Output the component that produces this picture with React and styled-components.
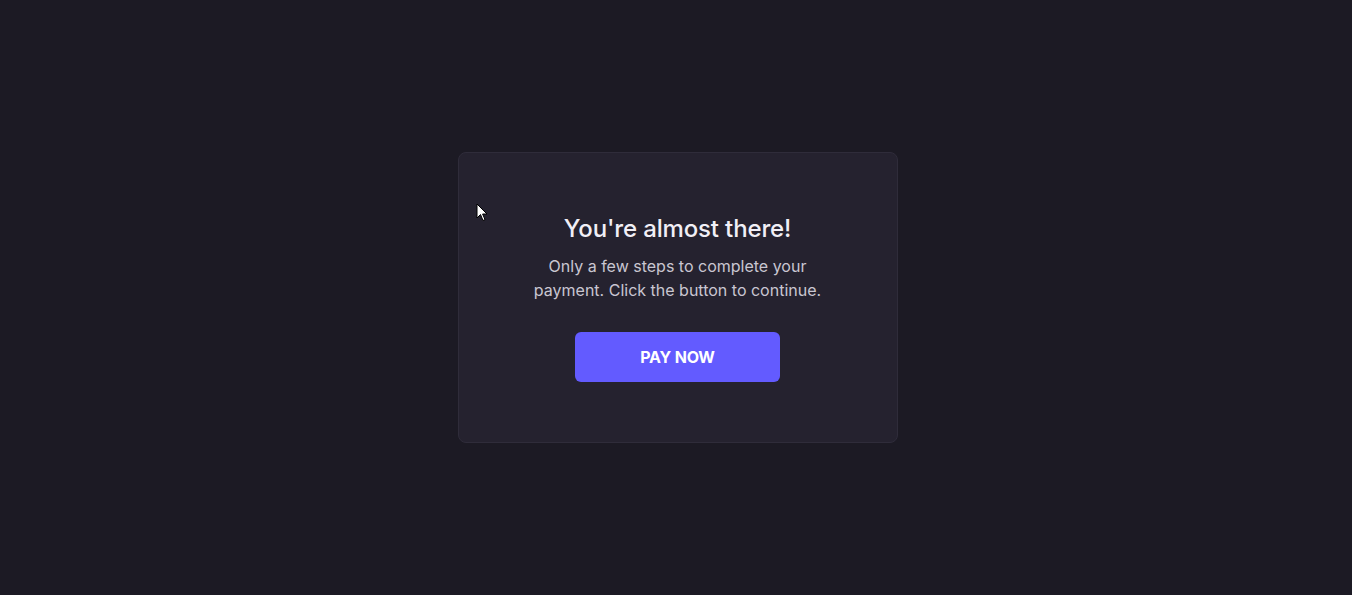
import React from "react";
import styled, { createGlobalStyle } from "styled-components";

const Global = createGlobalStyle`
  html, body { margin: 0; padding: 0; background: #1c1a24; }
  body { font-family: Inter, "Noto Sans", sans-serif; }
  * { box-sizing: border-box; }
`;

const Page = styled.main`
  position: relative;
  min-height: 595px;
  padding-left: 3px;
  display: flex;
  align-items: center;
  justify-content: center;
  background: #1c1a24;
`;

const Card = styled.section`
  width: 440px;
  height: 291px;
  padding: 60px 40px 0;
  background: #25222f;
  border: 1px solid #2f2c3a;
  border-radius: 8px;
  display: flex;
  flex-direction: column;
  align-items: center;
  text-align: center;
`;

const Title = styled.h1`
  margin: 0;
  font-size: 24px;
  line-height: 32px;
  font-weight: 500;
  color: #f1eff6;
  letter-spacing: -0.15px;
`;

const Subtitle = styled.p`
  margin: 9px 0 0;
  max-width: 300px;
  font-size: 16px;
  line-height: 24px;
  color: #c9c6d1;
  letter-spacing: 0;
`;

const PayButton = styled.button`
  margin-top: 30px;
  width: 205px;
  height: 50px;
  border: none;
  border-radius: 6px;
  background: #635bff;
  color: #ffffff;
  font-family: inherit;
  font-size: 16px;
  font-weight: 700;
  letter-spacing: -0.2px;
  cursor: pointer;
`;

const Pointer = styled.svg`
  position: absolute;
  left: 476px;
  top: 203px;
  width: 13px;
  height: 20px;
  pointer-events: none;
`;

export default function App() {
  return (
    <>
      <Global />
      <Page>
        <Card>
          <Title>You're almost there!</Title>
          <Subtitle>
            Only a few steps to complete your payment. Click the button to
            continue.
          </Subtitle>
          <PayButton>PAY NOW</PayButton>
        </Card>
        <Pointer viewBox="0 0 13 20">
          <path
            d="M1 1 L1 15 L4.5 11.5 L7 17.5 L9 16.6 L6.6 11 L11 11 Z"
            fill="#ffffff"
            stroke="#000000"
            strokeWidth="1"
            strokeLinejoin="round"
          />
        </Pointer>
      </Page>
    </>
  );
}
